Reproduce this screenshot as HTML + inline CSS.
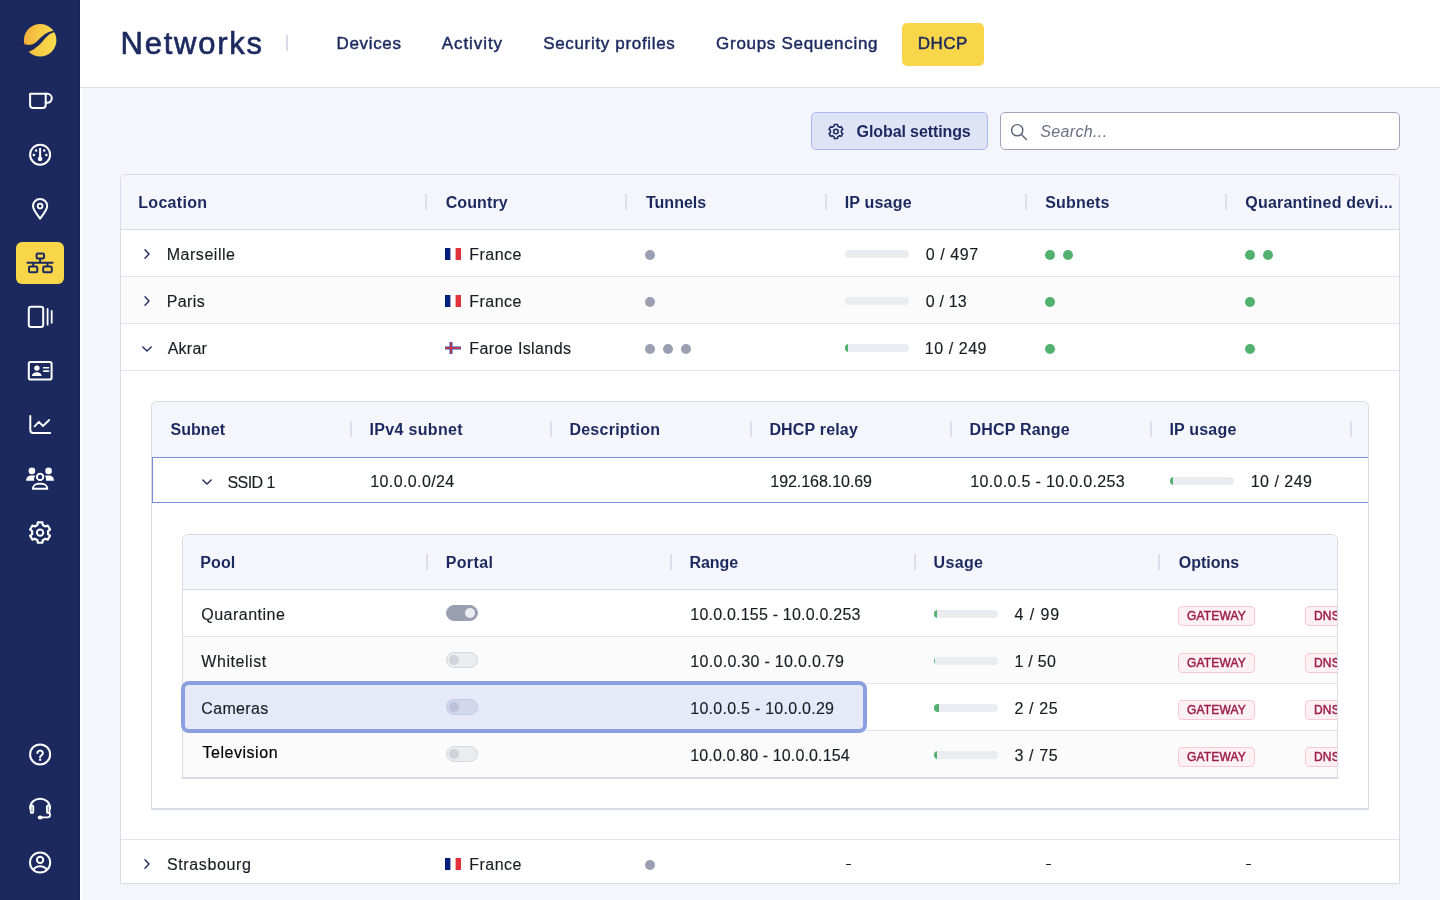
<!DOCTYPE html>
<html><head><meta charset="utf-8"><title>Networks - DHCP</title>
<style>
*{box-sizing:border-box;margin:0;padding:0}
html,body{width:1440px;height:900px;overflow:hidden}
body{background:#f5f6fb;font-family:"Liberation Sans",sans-serif;color:#1f2328;position:relative;font-size:16px}
.abs,.t,.h{position:absolute;white-space:nowrap}
.side{position:absolute;left:0;top:0;width:80px;height:900px;background:#1b295f}
.side svg{position:absolute;overflow:visible}
.act{position:absolute;left:16px;top:242px;width:48px;height:42px;border-radius:6px;background:#f9d649}
.top{position:absolute;left:80px;top:0;width:1360px;height:88px;background:#fff;border-bottom:1px solid #d9dde6}
.nav{color:#1b295f;font-size:17px;line-height:20px;top:34px;-webkit-text-stroke:0.45px #1b295f}
.h{color:#1b295f;font-weight:bold;font-size:16px;line-height:20px}
.t{color:#1a1e23;font-size:16px;line-height:20px;-webkit-text-stroke:0.15px #1a1e23}
.sep{position:absolute;width:2px;height:16px;background:#dddfe8}
.tbl{position:absolute;border:1px solid #d8dbe6;background:#fff;overflow:hidden}
.row{position:absolute;left:0;right:0;border-bottom:1px solid #e1e4ef;background:#fff}
.alt{background:#fbfbfc}
.hd{position:absolute;left:0;right:0;top:0;background:#f5f6fb;border-bottom:1px solid #d8dbe6}
.dot{position:absolute;width:10px;height:10px;border-radius:50%}
.g{background:#52b16e}.y{background:#9a9fb1}
.bar{position:absolute;width:64px;height:8px;border-radius:4px;background:#ebecf1;overflow:hidden}
.bar i{position:absolute;left:0;top:0;bottom:0;background:#52b16e}
.tag{position:absolute;height:20px;border:1px solid #f8c9d4;background:#fef1f4;border-radius:4px;color:#9c1c48;font-size:12px;font-weight:normal;-webkit-text-stroke:0.45px #9c1c48;letter-spacing:0.15px;line-height:18px;padding:0 8px;white-space:nowrap}
.tg{position:absolute;width:32px;height:16px;border-radius:8px;background:#ebecef;border:1px solid #d6d8df}
.tg i{position:absolute;left:2px;top:2px;width:10px;height:10px;border-radius:50%;background:#d0d3da}
.tg.on{background:#9a9fb1;border-color:#9a9fb1}
.tg.on i{left:auto;right:2px;background:#ecedf2}
.flag{position:absolute;width:16px;height:12px}
#app{position:absolute;left:0;top:0;width:1440px;height:900px;overflow:hidden;will-change:transform}
</style></head><body>
<div id="app">
<!--SIDEBAR-->
<div class="side" id="side">
<div class="act"></div>
<!--SIDE-->
<svg style="left:0;top:0" width="80" height="900" viewBox="0 0 80 900" fill="none" stroke="#fff" stroke-width="2" stroke-linecap="round" stroke-linejoin="round">
<defs><linearGradient id="lg" x1="0" y1="0" x2="1" y2="0.15"><stop offset="0" stop-color="#f2aa3b"/><stop offset="0.55" stop-color="#f6cc45"/><stop offset="1" stop-color="#f9db4b"/></linearGradient></defs>
<circle cx="40.15" cy="40.15" r="16.25" fill="url(#lg)" stroke="none"/>
<path d="M53.4 30.9 C48 31.3 44 34.2 39 39.3 S31 46.8 22.4 43.6 L26.6 52.6 C34 50 38.2 46.4 42.9 41 S49.2 33.6 55.2 31.8Z" fill="#1b295f" stroke="none"/>
<path d="M30.1 93.8H45.7V105.1a3 3 0 0 1-3 3H33.1a3 3 0 0 1-3-3Z"/><path d="M45.7 93.8H47.3a4.5 4.5 0 0 1 0 9H45.7"/>
<circle cx="40.1" cy="154.7" r="10"/><path d="M40.1 148.8V158"/><circle cx="40.1" cy="158.9" r="2.3" fill="#fff" stroke="none"/>
<circle cx="36.1" cy="150.6" r="1.25" fill="#fff" stroke="none"/>
<circle cx="44.2" cy="150.6" r="1.25" fill="#fff" stroke="none"/>
<circle cx="33.9" cy="155" r="1.25" fill="#fff" stroke="none"/>
<circle cx="46.3" cy="155" r="1.25" fill="#fff" stroke="none"/>
<path d="M40.1 218.6C36.3 213.6 33 209.8 33 206.1a7.1 7.1 0 0 1 14.2 0C47.2 209.8 43.9 213.6 40.1 218.6Z"/><circle cx="40.1" cy="206.1" r="2.4" stroke-width="1.8"/>
<g stroke="#1b295f"><rect x="36.6" y="253.4" width="7.4" height="5" rx="1.2"/><rect x="29" y="266.6" width="8.3" height="5.7" rx="1.2"/><rect x="43.2" y="266.6" width="8.6" height="5.7" rx="1.2"/><path d="M40.1 259V262.8M26.8 262.8H53.4M33.2 262.8V266M47.5 262.8V266" stroke-linecap="butt"/></g>
<rect x="28.8" y="306.8" width="14.4" height="20.2" rx="2.2"/><path d="M47.6 309V324.7M51.7 310.9V322.8" stroke-width="1.8"/>
<rect x="28.8" y="362.1" width="22.8" height="17.5" rx="1.8"/><circle cx="36.9" cy="368.1" r="2.7" fill="#fff" stroke="none"/><path d="M31.9 376a4.9 3.8 0 0 1 9.8 0Z" fill="#fff" stroke="none"/><path d="M43.6 367.8H48.6M43.6 371.1H48.6" stroke-width="1.6"/>
<path d="M30.3 416V430.1a3 3 0 0 0 3 3H50.2"/><path d="M34.6 426.3L38.9 421.8 43 426 49.2 420" stroke-width="1.8"/>
<g fill="#fff" stroke="none"><circle cx="31.9" cy="470.9" r="3.3"/><circle cx="48.6" cy="470.9" r="3.3"/><path d="M26.2 480.7C26.2 477.6 28.3 475.6 31.3 475.6H34.2C35 475.6 35.3 475.9 34.9 476.4C34.2 477.4 33.9 478.8 34.3 480.7Z"/><path d="M54 480.7C54 477.6 51.9 475.6 48.9 475.6H46C45.2 475.6 44.900 475.9 45.3 476.4C46 477.4 46.3 478.8 45.900 480.7Z"/></g>
<circle cx="40.1" cy="476.9" r="3.2"/><path d="M32.9 488.8C32.9 485.8 35.6 483.8 38.6 483.8H41.6C44.6 483.8 47.3 485.8 47.3 488.8Z"/>
<path d="M42.74 524.94 L42.44 522.47 L37.76 522.47 L37.46 524.94 L34.79 526.49 L32.49 525.51 L30.15 529.56 L32.15 531.05 L32.15 534.15 L30.15 535.64 L32.49 539.69 L34.79 538.71 L37.46 540.26 L37.76 542.73 L42.44 542.73 L42.74 540.26 L45.41 538.71 L47.71 539.69 L50.05 535.64 L48.05 534.15 L48.05 531.05 L50.05 529.56 L47.71 525.51 L45.41 526.49Z" stroke-width="2.2"/><circle cx="40.1" cy="532.6" r="3.2"/>
<circle cx="40.1" cy="754.4" r="10"/><path d="M37.4 753a2.75 2.5 0 1 1 4.300 2.100C40.600 755.800 40.100 756.200 40.100 757.200" stroke-width="2.1"/><circle cx="40.1" cy="759.8" r="1.2" fill="#fff" stroke="none"/>
<path d="M30.2 808.500V807.700a9.900 9 0 0 1 19.800 0V808.500"/><rect x="30.75" y="805.35" width="2.5" height="7.6" rx="1.25" stroke-width="1.9"/><rect x="46.95" y="805.35" width="2.5" height="7.6" rx="1.25" stroke-width="1.9"/><path d="M50 813.500V815a2.400 2.400 0 0 1-2.400 2.400H41" stroke-width="1.800"/><ellipse cx="40.200" cy="817.500" rx="2.500" ry="1.900" fill="#fff" stroke="none"/>
<circle cx="40.1" cy="862.5" r="10.1"/><circle cx="40.1" cy="859.9" r="3.15"/><path d="M33.6 869.600C35.200 867.200 37.400 866.300 40.100 866.300S45 867.200 46.600 869.600"/>
</svg>
<!--/SIDE-->
</div>
<div class="abs" id="strip" style="left:80px;top:0;width:2px;height:900px;background:#fff"></div><div class="abs" style="left:79px;top:0;width:1px;height:900px;background:#15235c"></div>
<!--TOPBAR-->
<div class="top" id="top">
<div class="abs" id="title" style="left:40.6px;top:24px;font-size:31px;line-height:40px;color:#1b295f;letter-spacing:1.74px;-webkit-text-stroke:0.65px #1b295f">Networks</div>
<div class="abs" style="left:206px;top:35px;width:2px;height:16px;background:#d9dce8"></div>
<div class="abs nav" id="n1" style="left:256.5px;letter-spacing:0.66px">Devices</div>
<div class="abs nav" id="n2" style="left:361.8px;letter-spacing:0.92px">Activity</div>
<div class="abs nav" id="n3" style="left:463.2px;letter-spacing:0.67px">Security profiles</div>
<div class="abs nav" id="n4" style="left:636.1px;letter-spacing:0.70px">Groups Sequencing</div>
<div class="abs" style="left:822px;top:23px;width:82px;height:43px;border-radius:5px;background:#f9d649"></div>
<div class="abs nav" id="n5" style="left:837.7px;letter-spacing:0.50px">DHCP</div>
</div>
<!--TOOLBAR-->
<div class="abs" style="left:811px;top:112px;width:177px;height:38px;border-radius:5px;background:#dfe3f6;border:1px solid #aab6ee"></div>
<svg class="abs" id="gs" style="left:826px;top:122px" width="20" height="20" viewBox="0 0 20 20" fill="none" stroke="#1b295f" stroke-width="1.5" stroke-linejoin="round"><path d="M11.72 4.21 L11.52 2.48 L8.28 2.48 L8.08 4.21 L6.23 5.27 L4.63 4.59 L3.01 7.39 L4.40 8.43 L4.40 10.57 L3.01 11.61 L4.63 14.41 L6.23 13.73 L8.08 14.79 L8.28 16.52 L11.52 16.52 L11.72 14.79 L13.57 13.73 L15.17 14.41 L16.79 11.61 L15.40 10.57 L15.40 8.43 L16.79 7.39 L15.17 4.59 L13.57 5.27Z"/><circle cx="9.9" cy="9.5" r="2.3"/></svg>
<div class="abs h" id="gst" style="left:856.6px;top:122px;letter-spacing:-0.10px">Global settings</div>
<div class="abs" style="left:1000px;top:112px;width:400px;height:38px;border-radius:5px;background:#fff;border:1px solid #9da3b8"></div>
<svg class="abs" style="left:1010px;top:123px" width="18" height="18" viewBox="0 0 18 18" fill="none" stroke="#5b6378" stroke-width="1.4" stroke-linecap="round"><circle cx="7.2" cy="7.2" r="5.6"/><path d="M11.4 11.4l5 5"/></svg>
<div class="abs" id="srch" style="left:1040.2px;top:122px;font-size:16px;line-height:20px;font-style:italic;color:#6b7183;letter-spacing:0.36px">Search...</div>
<!--TABLE-->
<div class="tbl" id="main" style="left:120px;top:174px;width:1280px;height:710px;border-radius:6px 6px 0 0"></div>
<div class="abs" style="left:121px;top:175px;width:1278px;height:54px;background:#f5f6fb;border-radius:5px 5px 0 0"></div>
<div class="abs" style="left:121px;top:229px;width:1278px;height:1px;background:#d8dbe6"></div>
<div class="h" id="mh139" style="left:138.3px;top:193px;letter-spacing:0.29px;">Location</div>
<div class="h" id="mh445" style="left:445.7px;top:193px;letter-spacing:0.1px;">Country</div>
<div class="h" id="mh645" style="left:646.0px;top:193px;letter-spacing:0.0px;">Tunnels</div>
<div class="h" id="mh845" style="left:844.7px;top:193px;letter-spacing:0.19px;">IP usage</div>
<div class="h" id="mh1045" style="left:1045.3px;top:193px;letter-spacing:0.15px;">Subnets</div>
<div class="h" id="mh1245" style="left:1245.3px;top:193px;letter-spacing:0.19px;">Quarantined devi...</div>
<div class="sep" style="left:425px;top:194px"></div>
<div class="sep" style="left:625px;top:194px"></div>
<div class="sep" style="left:825px;top:194px"></div>
<div class="sep" style="left:1025px;top:194px"></div>
<div class="sep" style="left:1225px;top:194px"></div>
<div class="abs" style="left:121px;top:276px;width:1278px;height:1px;background:#e1e4ef"></div>
<svg class="abs" style="left:143px;top:248px" width="8" height="12" viewBox="0 0 8 12" fill="none" stroke="#1b295f" stroke-width="1.35" stroke-linecap="round" stroke-linejoin="round"><path d="M2 1.8L6 6 2 10.2"/></svg>
<div class="t" id="rMarseille" style="left:166.7px;top:245px;letter-spacing:0.54px;">Marseille</div>
<svg class="flag" style="left:445px;top:248px" viewBox="0 0 16 12"><rect width="16" height="12" fill="#fff"/><rect width="5.4" height="12" fill="#001e7c"/><rect x="10.6" width="5.4" height="12" fill="#e1323c"/></svg>
<div class="t" id="cMarseille" style="left:469.3px;top:245px;letter-spacing:0.48px;">France</div>
<div class="dot y" style="left:645px;top:250px"></div>
<div class="bar" style="left:845px;top:250px"><i style="width:0px"></i></div>
<div class="t" id="uMarseille" style="left:925.7px;top:245px;letter-spacing:0.6px;">0 / 497</div>
<div class="dot g" style="left:1045px;top:250px"></div>
<div class="dot g" style="left:1063px;top:250px"></div>
<div class="dot g" style="left:1245px;top:250px"></div>
<div class="dot g" style="left:1263px;top:250px"></div>
<div class="abs" style="left:121px;top:277px;width:1278px;height:46px;background:#fbfbfc"></div>
<div class="abs" style="left:121px;top:323px;width:1278px;height:1px;background:#e1e4ef"></div>
<svg class="abs" style="left:143px;top:295px" width="8" height="12" viewBox="0 0 8 12" fill="none" stroke="#1b295f" stroke-width="1.35" stroke-linecap="round" stroke-linejoin="round"><path d="M2 1.8L6 6 2 10.2"/></svg>
<div class="t" id="rParis" style="left:166.7px;top:292px;letter-spacing:0.4px;">Paris</div>
<svg class="flag" style="left:445px;top:295px" viewBox="0 0 16 12"><rect width="16" height="12" fill="#fff"/><rect width="5.4" height="12" fill="#001e7c"/><rect x="10.6" width="5.4" height="12" fill="#e1323c"/></svg>
<div class="t" id="cParis" style="left:469.3px;top:292px;letter-spacing:0.48px;">France</div>
<div class="dot y" style="left:645px;top:297px"></div>
<div class="bar" style="left:845px;top:297px"><i style="width:0px"></i></div>
<div class="t" id="uParis" style="left:925.7px;top:292px;letter-spacing:0.2px;">0 / 13</div>
<div class="dot g" style="left:1045px;top:297px"></div>
<div class="dot g" style="left:1245px;top:297px"></div>
<div class="abs" style="left:121px;top:370px;width:1278px;height:1px;background:#e1e4ef"></div>
<svg class="abs" style="left:141px;top:345px" width="12" height="8" viewBox="0 0 12 8" fill="none" stroke="#1b295f" stroke-width="1.35" stroke-linecap="round" stroke-linejoin="round"><path d="M1.8 2L6 6 10.2 2"/></svg>
<div class="t" id="rAkrar" style="left:167.7px;top:339px;letter-spacing:0.25px;">Akrar</div>
<svg class="flag" style="left:445px;top:342px" viewBox="0 0 16 12"><rect width="16" height="12" fill="#fff"/><path d="M0 4.5h4.5V0h3v4.5H16v3H7.5V12h-3V7.5H0z" fill="#2050b0"/><path d="M0 5.3h5.3V0h1.4v5.3H16v1.4H6.7V12H5.300V6.7H0z" fill="#e0323c"/></svg>
<div class="t" id="cAkrar" style="left:469.3px;top:339px;letter-spacing:0.39px;">Faroe Islands</div>
<div class="dot y" style="left:645px;top:344px"></div>
<div class="dot y" style="left:663px;top:344px"></div>
<div class="dot y" style="left:681px;top:344px"></div>
<div class="bar" style="left:845px;top:344px"><i style="width:3px"></i></div>
<div class="t" id="uAkrar" style="left:924.7px;top:339px;letter-spacing:0.57px;">10 / 249</div>
<div class="dot g" style="left:1045px;top:344px"></div>
<div class="dot g" style="left:1245px;top:344px"></div>
<div class="abs" style="left:121px;top:839px;width:1278px;height:1px;background:#e1e4ef"></div>
<svg class="abs" style="left:143px;top:858px" width="8" height="12" viewBox="0 0 8 12" fill="none" stroke="#1b295f" stroke-width="1.35" stroke-linecap="round" stroke-linejoin="round"><path d="M2 1.8L6 6 2 10.2"/></svg>
<div class="t" id="rStras" style="left:166.9px;top:855px;letter-spacing:0.63px;">Strasbourg</div>
<svg class="flag" style="left:445px;top:858px" viewBox="0 0 16 12"><rect width="16" height="12" fill="#fff"/><rect width="5.4" height="12" fill="#001e7c"/><rect x="10.6" width="5.4" height="12" fill="#e1323c"/></svg>
<div class="t" id="cStras" style="left:469.3px;top:855px;letter-spacing:0.48px;">France</div>
<div class="dot y" style="left:645px;top:860px"></div>
<div class="abs" style="left:845.8px;top:863.8px;width:5.6px;height:1.6px;background:#1a1e23;border-radius:.5px"></div>
<div class="abs" style="left:1045.8px;top:863.8px;width:5.6px;height:1.6px;background:#1a1e23;border-radius:.5px"></div>
<div class="abs" style="left:1245.8px;top:863.8px;width:5.6px;height:1.6px;background:#1a1e23;border-radius:.5px"></div>
<div class="tbl" id="sub" style="left:151px;top:401px;width:1218px;height:409px;border-radius:6px 6px 0 0;border-bottom:2px solid #d8dbe6"></div>
<div class="abs" style="left:152px;top:402px;width:1216px;height:55px;background:#f5f6fb;border-radius:5px 5px 0 0"></div>
<div class="h" id="sh170" style="left:170.4px;top:420px;letter-spacing:0.08px;">Subnet</div>
<div class="h" id="sh370" style="left:369.4px;top:420px;letter-spacing:0.35px;">IPv4 subnet</div>
<div class="h" id="sh570" style="left:569.4px;top:420px;letter-spacing:0.26px;">Description</div>
<div class="h" id="sh770" style="left:769.4px;top:420px;letter-spacing:0.17px;">DHCP relay</div>
<div class="h" id="sh970" style="left:969.4px;top:420px;letter-spacing:0.2px;">DHCP Range</div>
<div class="h" id="sh1170" style="left:1169.4px;top:420px;letter-spacing:0.2px;">IP usage</div>
<div class="sep" style="left:350px;top:421px"></div>
<div class="sep" style="left:550px;top:421px"></div>
<div class="sep" style="left:750px;top:421px"></div>
<div class="sep" style="left:950px;top:421px"></div>
<div class="sep" style="left:1150px;top:421px"></div>
<div class="sep" style="left:1350px;top:421px"></div>
<div class="abs" style="left:152px;top:457px;width:1216px;height:46px;border:1px solid #768ddd;border-right:0;background:#fff"></div>
<svg class="abs" style="left:201px;top:478px" width="12" height="8" viewBox="0 0 12 8" fill="none" stroke="#1b295f" stroke-width="1.35" stroke-linecap="round" stroke-linejoin="round"><path d="M1.8 2L6 6 10.2 2"/></svg>
<div class="t" id="ssid" style="left:227.5px;top:473px;letter-spacing:-0.58px;">SSID 1</div>
<div class="t" id="s370" style="left:370.3px;top:472px;letter-spacing:0.39px;">10.0.0.0/24</div>
<div class="t" id="s770" style="left:770.3px;top:472px;letter-spacing:-0.05px;">192.168.10.69</div>
<div class="t" id="s970" style="left:970.3px;top:472px;letter-spacing:0.33px;">10.0.0.5 - 10.0.0.253</div>
<div class="bar" style="left:1170px;top:477px"><i style="width:3px"></i></div>
<div class="t" id="s1250" style="left:1250.7px;top:472px;letter-spacing:0.49px;">10 / 249</div>
<div class="tbl" id="pool" style="left:182px;top:534px;width:1156px;height:245px;border-radius:6px 6px 0 0;border-bottom:2px solid #d8dbe6"></div>
<div class="abs" style="left:183px;top:535px;width:1154px;height:54px;background:#f5f6fb;border-radius:5px 5px 0 0"></div>
<div class="abs" style="left:183px;top:589px;width:1154px;height:1px;background:#d8dbe6"></div>
<div class="h" id="ph201" style="left:200.3px;top:553px;letter-spacing:0.1px;">Pool</div>
<div class="h" id="ph446" style="left:445.7px;top:553px;letter-spacing:0.36px;">Portal</div>
<div class="h" id="ph690" style="left:689.4px;top:553px;letter-spacing:-0.03px;">Range</div>
<div class="h" id="ph934" style="left:933.6px;top:553px;letter-spacing:0.32px;">Usage</div>
<div class="h" id="ph1178" style="left:1178.8px;top:553px;letter-spacing:0.0px;">Options</div>
<div class="sep" style="left:426px;top:554px"></div>
<div class="sep" style="left:670px;top:554px"></div>
<div class="sep" style="left:914px;top:554px"></div>
<div class="sep" style="left:1158px;top:554px"></div>
<div class="abs" style="left:183px;top:636px;width:1154px;height:1px;background:#e1e4ef"></div>
<div class="abs" style="left:183px;top:637px;width:1154px;height:46px;background:#fbfbfc"></div>
<div class="abs" style="left:183px;top:683px;width:1154px;height:1px;background:#e1e4ef"></div>
<div class="abs" style="left:183px;top:730px;width:1154px;height:1px;background:#e1e4ef"></div>
<div class="abs" style="left:183px;top:731px;width:1154px;height:46px;background:#fbfbfc"></div>
<div class="abs" style="left:181px;top:681px;width:686px;height:52px;border:4px solid #8b9fe0;border-radius:8px;background:#e6e9f8"></div>
<div class="t" id="pQuarantine" style="left:201.3px;top:605px;letter-spacing:0.48px;">Quarantine</div>
<div class="tg on" style="left:446px;top:605px"><i></i></div>
<div class="t" id="gQuarantine" style="left:690.3px;top:605px;letter-spacing:0.21px;">10.0.0.155 - 10.0.0.253</div>
<div class="bar" style="left:934px;top:610px"><i style="width:3px"></i></div>
<div class="t" id="puQuarantine" style="left:1014.6px;top:605px;letter-spacing:0.92px;">4 / 99</div>
<div class="tag" style="left:1178px;top:606px">GATEWAY</div>
<div class="abs" style="left:1305px;top:606px;width:32px;height:20px;overflow:hidden"><div class="tag" style="left:0;top:0;width:60px">DNS</div></div>
<div class="t" id="pWhitelist" style="left:201.3px;top:652px;letter-spacing:0.55px;">Whitelist</div>
<div class="tg" style="left:446px;top:652px"><i></i></div>
<div class="t" id="gWhitelist" style="left:690.3px;top:652px;letter-spacing:0.3px;">10.0.0.30 - 10.0.0.79</div>
<div class="bar" style="left:934px;top:657px"><i style="width:1px"></i></div>
<div class="t" id="puWhitelist" style="left:1014.4px;top:652px;letter-spacing:0.28px;">1 / 50</div>
<div class="tag" style="left:1178px;top:653px">GATEWAY</div>
<div class="abs" style="left:1305px;top:653px;width:32px;height:20px;overflow:hidden"><div class="tag" style="left:0;top:0;width:60px">DNS</div></div>
<div class="t" id="pCameras" style="left:201.3px;top:699px;letter-spacing:0.33px;">Cameras</div>
<div class="tg" style="left:446px;top:699px;background:#d3d7ec;border-color:#c3c8e3"><i style="background:#bcc1dc"></i></div>
<div class="t" id="gCameras" style="left:690.3px;top:699px;letter-spacing:0.26px;">10.0.0.5 - 10.0.0.29</div>
<div class="bar" style="left:934px;top:704px"><i style="width:5px"></i></div>
<div class="t" id="puCameras" style="left:1014.6px;top:699px;letter-spacing:0.58px;">2 / 25</div>
<div class="tag" style="left:1178px;top:700px">GATEWAY</div>
<div class="abs" style="left:1305px;top:700px;width:32px;height:20px;overflow:hidden"><div class="tag" style="left:0;top:0;width:60px">DNS</div></div>
<div class="t" id="pTelevision" style="left:202.5px;top:743px;color:#000;-webkit-text-stroke:0.2px #000;letter-spacing:0.53px;">Television</div>
<div class="tg" style="left:446px;top:746px"><i></i></div>
<div class="t" id="gTelevision" style="left:690.3px;top:746px;letter-spacing:0.13px;">10.0.0.80 - 10.0.0.154</div>
<div class="bar" style="left:934px;top:751px"><i style="width:3px"></i></div>
<div class="t" id="puTelevision" style="left:1014.6px;top:746px;letter-spacing:0.58px;">3 / 75</div>
<div class="tag" style="left:1178px;top:747px">GATEWAY</div>
<div class="abs" style="left:1305px;top:747px;width:32px;height:20px;overflow:hidden"><div class="tag" style="left:0;top:0;width:60px">DNS</div></div>
<!--/TABLE-->
</div>
</body></html>
